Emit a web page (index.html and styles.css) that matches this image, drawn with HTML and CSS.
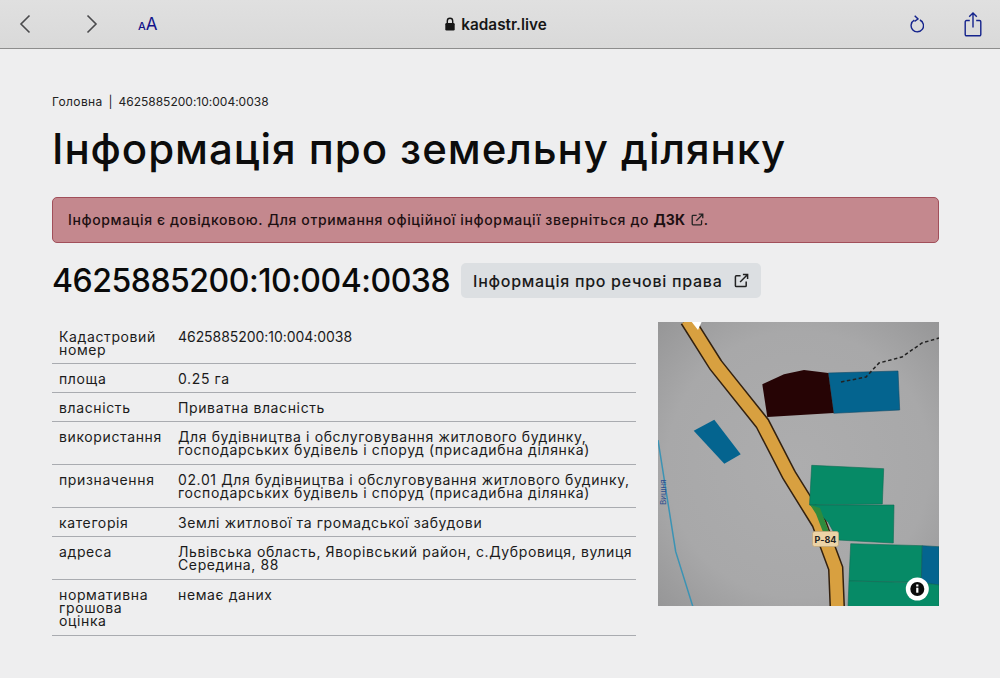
FILE: index.html
```html
<!DOCTYPE html>
<html lang="uk">
<head>
    <meta charset="UTF-8">
    <meta name="viewport" content="width=device-width, initial-scale=1.0">
    <title>Інформація про земельну ділянку</title>
    <link rel="stylesheet" href="styles.css">
</head>
<body>
    <div id="toolbar">
        <div class="toolGroup">
            <svg class="navIcon" width="14" height="20" viewBox="0 0 14 20"><path d="M11.5 1.5 3 10l8.500 8.500"/></svg>
            <svg class="navIcon forward" width="14" height="20" viewBox="0 0 14 20"><path d="M2.500 1.500 11 10l-8.500 8.500"/></svg>
            <span class="textSize"><small>A</small>A</span>
        </div>
        <div class="address">
            <svg width="10" height="14" viewBox="0 0 10 14"><path class="lockBody" d="M1.500 6h7A1.200 1.200 0 0 1 9.700 7.200v5A1.200 1.200 0 0 1 8.500 13.400h-7A1.200 1.200 0 0 1 .3 12.200v-5A1.200 1.200 0 0 1 1.500 6z"/><path class="lockBar" d="M2.300 6.500V4a2.700 2.700 0 0 1 5.400 0v2.500"/></svg>
            <span>kadastr.live</span>
        </div>
        <div class="toolGroup right">
            <svg class="blueIcon" width="14" height="18" viewBox="0 0 14 18"><path d="M4.300 5.200a6.200 6.200 0 1 0 5.600-.2"/><path d="M4.700.8 8 4 4.500 6.400"/></svg>
            <svg class="blueIcon" width="18" height="25" viewBox="0 0 18 25"><path d="M5.800 8.500H2.500a1.300 1.300 0 0 0-1.300 1.300v12.700a1.300 1.300 0 0 0 1.300 1.300h13a1.300 1.300 0 0 0 1.300-1.300V9.800a1.300 1.300 0 0 0-1.300-1.300h-3.300"/><path d="M9 15.500V1M5.200 4.700 9 1l3.800 3.700"/></svg>
        </div>
    </div>

    <div id="content">
        <p class="breadcrumb"><span class="crumb">Головна</span> <span class="sep">|</span> 4625885200:10:004:0038</p>
        <h1 class="pageTitle">Інформація про земельну ділянку</h1>

        <div class="alertBox">
            Інформація є довідковою. Для отримання офіційної інформації зверніться до <b>ДЗК</b>
            <svg class="extIcon small" viewBox="0 0 16 16"><path d="M7 3H2.500A1 1 0 0 0 1.500 4v9.500a1 1 0 0 0 1 1H12a1 1 0 0 0 1-1V9"/><path d="M6.500 9.500 14.500 1.500M9.500 1.500h5v5"/></svg>.
        </div>

        <div class="parcelHead">
            <h2 class="parcelNumber">4625885200:10:004:0038</h2>
            <a class="rightsButton">Інформація про речові права
                <svg class="extIcon" viewBox="0 0 16 16"><path d="M7 3H2.500A1 1 0 0 0 1.500 4v9.500a1 1 0 0 0 1 1H12a1 1 0 0 0 1-1V9"/><path d="M6.500 9.500 14.500 1.500M9.500 1.500h5v5"/></svg>
            </a>
        </div>

        <div class="details">
            <table class="infoTable">
                <tr><td class="key">Кадастровий номер</td><td class="num">4625885200:10:004:0038</td></tr>
                <tr><td class="key">площа</td><td>0.25 га</td></tr>
                <tr><td class="key">власність</td><td>Приватна власність</td></tr>
                <tr class="wrapped"><td class="key">використання</td><td>Для будівництва і обслуговування житлового будинку, господарських будівель і споруд (присадибна ділянка)</td></tr>
                <tr class="wrapped"><td class="key">призначення</td><td>02.01 Для будівництва і обслуговування житлового будинку, господарських будівель і споруд (присадибна ділянка)</td></tr>
                <tr><td class="key">категорія</td><td>Землі житлової та громадської забудови</td></tr>
                <tr class="wrapped"><td class="key">адреса</td><td>Львівська область, Яворівський район, с.Дубровиця, вулиця Середина, 88</td></tr>
                <tr class="wrapped"><td class="key">нормативна грошова оцінка</td><td>немає даних</td></tr>
            </table>

            <div class="mapBox">
                <svg width="281" height="284" viewBox="0 0 281 284">
                    <defs>
                        <radialGradient id="mapBg" cx="50%" cy="50%" r="72%">
                            <stop offset="0" stop-color="#adadae"/>
                            <stop offset="0.65" stop-color="#a8a8a9"/>
                            <stop offset="1" stop-color="#959596"/>
                        </radialGradient>
                    </defs>
                    <rect width="281" height="284" fill="url(#mapBg)"/>
                    <path d="M0 118 17.700 229.700 35 285" fill="none" stroke="#3b93b4" stroke-width="1.500"/>
                    <text class="mapWater" transform="translate(8 183) rotate(-90)">Вишня</text>
                    <path d="M29.300-2 57.700 43 104.300 101.300 131 153 161 201.300 177.700 246.300 179.300 286" fill="none" stroke="#33210f" stroke-width="15.500"/>
                    <path d="M29.300-2 57.700 43 104.300 101.300 131 153 161 201.300 177.700 246.300 179.300 286" fill="none" stroke="#d8a040" stroke-width="12.500"/>
                    <path d="M33-1 44-1 40 8z" fill="#fff"/>
                    <path d="M170.300 51 240 49 241.700 88 175.700 91.300z" fill="#04648f" stroke="#104a66" stroke-width=".6"/>
                    <path d="M104.300 62.300 126 52.300 146 48 170.300 51 175.700 91 109.300 95z" fill="#260405"/>
                    <path d="M35.700 108.700 56.300 97.700 82.700 132.300 66.300 141.700z" fill="#04648f"/>
                    <path d="M153.700 143.300 225.700 146.700 224.300 182 152.300 183 151.500 183z" fill="#068a66" stroke="#0d6a52" stroke-width=".6"/>
                    <path d="M152.300 183 236 183 235.300 221 180 218 170 200z" fill="#068a66" stroke="#0d6a52" stroke-width=".6"/>
                    <path d="M192.700 221.700 264.300 223.700 263.300 260.300 191 259z" fill="#068a66" stroke="#0d6a52" stroke-width=".6"/>
                    <path d="M264.300 223.700 281 224.700 281 263 263.300 260.700z" fill="#04648f" stroke="#0d5a62" stroke-width=".6"/>
                    <path d="M191 259 263.300 260.700 281 263 281 285 190 285z" fill="#068a66" stroke="#0d6a52" stroke-width=".6"/>
                    <path d="M152.300 183 162 186 171 210 165 210 158 192z" fill="#2f8b3d"/>
                    <path d="M183 60 208 55 221 41 244 35 264 21 281 16" fill="none" stroke="#222" stroke-width="1.500" stroke-dasharray="3.500 2.500"/>
                    <rect x="154.500" y="209.500" width="26" height="15" rx="2" fill="#ecd3a6" stroke="#bfa77e" stroke-width=".8"/>
                    <text class="mapRoad" x="167.500" y="220.500">Р-84</text>
                    <circle cx="259.300" cy="267" r="11.500" fill="#fff"/>
                    <circle cx="259.300" cy="267" r="7" fill="#0b0b0b"/>
                    <rect x="258.200" y="265.700" width="2.200" height="5" fill="#fff"/>
                    <rect x="258.200" y="262.500" width="2.200" height="2" fill="#fff"/>
                </svg>
            </div>
        </div>
    </div>
</body>
</html>
```

FILE: styles.css
```css
body{
    margin: 0;
    background-color: #eeeeef;
    color: #111;
    font-family: 'Inter',sans-serif;
    font-variant-ligatures: no-contextual;
    height: 678px;
    overflow: hidden;
}

#toolbar{
    height: 48px;
    background: linear-gradient(#e0e0e0, #d9d9d9);
    border-bottom: 1px solid #8d8d8d;
    display: flex;
    align-items: center;
    justify-content: space-between;
    padding: 0 18px;
}

.toolGroup{
    display: flex;
    align-items: center;
    width: 180px;
}

.toolGroup.right{
    justify-content: flex-end;
    gap: 40px;
}

.navIcon{
    fill: none;
    stroke: #4a4a4c;
    stroke-width: 1.600;
}

.navIcon.forward{
    margin-left: 53px;
}

.textSize{
    margin-left: 39px;
    color: #12128a;
    font-size: 17px;
    line-height: 1;
}

.textSize small{
    font-size: 11px;
    font-weight: 500;
}

.address{
    display: flex;
    align-items: center;
    gap: 6px;
    font-size: 15.300px;
    font-weight: 600;
    color: #161616;
    margin-right: 8px;
}

.lockBody{
    fill: #161616;
}

.lockBar{
    fill: none;
    stroke: #161616;
    stroke-width: 1.400;
}

.blueIcon{
    fill: none;
    stroke: #14238c;
    stroke-width: 1.400;
}

#content{
    padding: 46px 61px 0 52px;
}

.breadcrumb{
    margin: 0;
    font-size: 12px;
    line-height: 14px;
    color: #222;
}

.crumb{
    letter-spacing: 0.400px;
}

.sep{
    margin: 0 2.500px;
    color: #222;
}

.pageTitle{
    margin: 15px 0 0;
    font-size: 42px;
    line-height: 50px;
    font-weight: 500;
    letter-spacing: 0.940px;
    color: #0c0c0c;
}

.alertBox{
    margin-top: 23px;
    height: 46px;
    box-sizing: border-box;
    padding: 0 15px;
    line-height: 44px;
    background-color: #c4888e;
    border: 1px solid #a14f5a;
    border-radius: 5px;
    font-size: 14px;
    font-weight: 500;
    letter-spacing: 0.620px;
    color: #1d1012;
}

.alertBox b{
    font-weight: 700;
    letter-spacing: 0.200px;
}

.extIcon{
    width: 15px;
    height: 15px;
    fill: none;
    stroke: #222;
    stroke-width: 1.600;
    flex: none;
}

.extIcon.small{
    width: 13px;
    height: 13px;
    vertical-align: -1px;
    margin-left: 1px;
}

.parcelHead{
    margin-top: 20px;
    display: flex;
    align-items: center;
    gap: 11px;
}

.parcelNumber{
    margin: 0;
    font-size: 32px;
    line-height: 35px;
    font-weight: 500;
    letter-spacing: -0.480px;
    color: #0a0a0a;
}

.rightsButton{
    width: 300px;
    height: 35px;
    box-sizing: border-box;
    padding: 0 12px;
    display: flex;
    align-items: center;
    justify-content: space-between;
    white-space: nowrap;
    background-color: #dcdfe2;
    border-radius: 5px;
    font-size: 16px;
    font-weight: 500;
    letter-spacing: 0.720px;
    color: #1a1a1a;
}

.details{
    margin-top: 24px;
    display: flex;
    justify-content: space-between;
    align-items: flex-start;
}

.infoTable{
    width: 584px;
    border-collapse: collapse;
    font-size: 14px;
    line-height: 13px;
    letter-spacing: 0.620px;
    color: #1b1b1b;
}

.infoTable td{
    padding: 8px 0 7px 7px;
    vertical-align: top;
    border-bottom: 1px solid #a9abb0;
}

.infoTable .wrapped td{
    padding-bottom: 8px;
}

.infoTable .key{
    width: 112px;
}

.infoTable .num{
    letter-spacing: -0.050px;
}

.mapBox{
    width: 281px;
    height: 284px;
}

.mapBox svg{
    display: block;
}

.mapWater{
    font-size: 8px;
    fill: #2c4d8f;
}

.mapRoad{
    font-size: 9px;
    font-weight: 700;
    fill: #222;
    text-anchor: middle;
}
```
